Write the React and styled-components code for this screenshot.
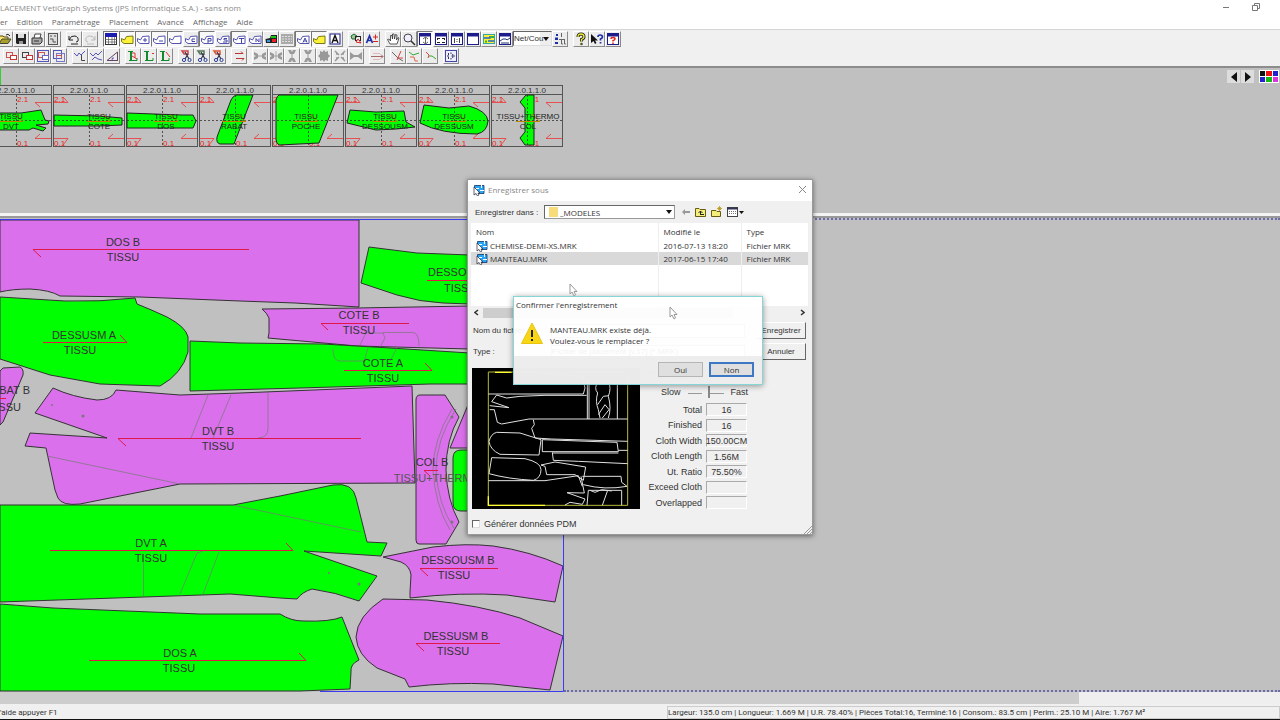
import React from "react";
import styled, { createGlobalStyle } from "styled-components";

const GlobalStyle = createGlobalStyle`
  * {
    box-sizing: border-box;
  }
  body {
    margin: 0;
    background: #c0c0c0;
    font-family: "Open Sans", "Noto Sans", sans-serif;
    font-size: 8px;
    color: #333;
  }
  button, input, select {
    font: inherit;
    color: inherit;
    margin: 0;
    padding: 0;
  }
  svg {
    display: block;
    flex: none;
  }
`;

const Window = styled.div`
  position: relative;
  min-height: 100vh;
  display: flex;
  flex-direction: column;
  overflow: hidden;
  border-bottom: 1px solid #111;
`;

/* ---------- title, menu and toolbars ---------- */

const TitleBar = styled.header`
  display: flex;
  align-items: center;
  justify-content: space-between;
  height: 16px;
  padding: 0 20px 2px 0;
  background: #fff;
  color: #8a8a8a;
  white-space: nowrap;
`;

const WindowControls = styled.div`
  display: flex;
  gap: 22px;
`;

const PlainButton = styled.button`
  display: flex;
  align-items: center;
  justify-content: center;
  border: 0;
  background: none;
`;

const MenuBar = styled.nav`
  display: flex;
  align-items: center;
  gap: 9px;
  height: 13px;
  padding-bottom: 2px;
  background: #fff;
`;

const MenuLink = styled.a`
  color: #666;
  text-decoration: none;
`;

const ToolbarArea = styled.div`
  background: #f0f0f0;
  border-top: 1px solid #d5d5d5;
  border-bottom: 2px solid #8c8c8c;
  padding-bottom: 2px;
`;

const Toolbar = styled.div`
  display: flex;
  align-items: center;
  gap: 5px;
  height: 17px;
  margin-left: ${(p) => p.$indent}px;
`;

const ToolGroup = styled.div`
  display: flex;
`;

const ToolButton = styled.button`
  width: 16px;
  height: 16px;
  display: flex;
  align-items: center;
  justify-content: center;
  border: 1px solid;
  border-color: ${(p) =>
    p.$pressed ? "#777 #fff #fff #777" : "#fff #8a8a8a #8a8a8a #fff"};
  background: ${(p) => (p.$pressed ? "#f8f8f8" : "#ececec")};
`;

const ZoomSelect = styled.select`
  width: 39px;
  height: 15px;
  border: 1px solid;
  border-color: #666 #ddd #ddd #666;
  border-radius: 0;
  font-family: "Liberation Sans", Arial, sans-serif;
  background: #fff;
  appearance: none;
  background-image: linear-gradient(#eee, #eee);
  background-size: 11px 13px;
  background-position: right;
  background-repeat: no-repeat;
`;

const SelectBox = styled.div`
  position: relative;
  display: flex;
`;

const SelectArrow = styled.span`
  position: absolute;
  right: 3px;
  top: 0;
  bottom: 0;
  display: flex;
  align-items: center;
  pointer-events: none;
`;

const Down = () => (
  <svg width="6" height="4" viewBox="0 0 6 4">
    <path d="M0 0H6L3 4Z" fill="#111" />
  </svg>
);

const NAVY = "#1c1c8c";
const outline = "M1.5 6.5 4.5 8 6.5 4.5 13 4V11.5H4L1.5 9.5Z";

const Piece = ({ mark, fill = "#fff" }) => (
  <>
    <path d={outline} fill={fill} stroke="#5555b0" />
    <path d={mark} fill="none" stroke="#4444a8" />
  </>
);

const Pane = ({ children }) => (
  <>
    <rect x="1.5" y="1.5" width="11" height="11" fill="#fff" stroke={NAVY} />
    <path d="M1 3H13" stroke={NAVY} strokeWidth="3" />
    {children}
  </>
);

const Scissors = ({ color }) => (
  <>
    <path d="M3 2H9V5H5Z" fill="none" stroke={color} strokeWidth="1.5" />
    <path d="M6 3 10 10M9 5 6 10" stroke="#335" strokeWidth="1.2" />
    <circle cx="5" cy="11" r="1.6" fill="none" stroke="#2d3f9c" />
    <circle cx="10.5" cy="11" r="1.6" fill="none" stroke="#2d3f9c" />
  </>
);

const Squares = ({ a, b, fill = "none" }) => (
  <>
    <rect x="2.5" y="3.5" width="6" height="5" fill={fill} stroke={a} />
    <rect x="6.5" y="6.5" width="6" height="4" fill="#fff" stroke={b} />
  </>
);

const Ell = ({ dot }) => (
  <>
    <path d="M2 2.5H7M3 11.5H11V9" fill="none" stroke="#128a2c" />
    <path d="M5 2V12" stroke="#128a2c" strokeWidth="2" />
    <path d={dot} stroke="#d33" fill="none" />
  </>
);

const Clamp = ({ turn = 0 }) => (
  <path
    transform={`rotate(${turn} 7 7)`}
    d="M1 3 5 5V9L1 11V8L3 7 1 6ZM13 3 9 5V9L13 11V8L11 7 13 6ZM5 6.5H9V7.5H5Z"
    fill="#999"
  />
);

const glyphs = {
  open: (
    <>
      <path d="M1 11V4H5L6 5H10V7" fill="#f7e774" stroke="#554400" />
      <path d="M1 11.5 4 7H13L10 11.5Z" fill="#a8a02a" stroke="#443" />
      <path d="M8 3Q10 1 12 4" fill="none" stroke="#222" />
    </>
  ),
  save: (
    <>
      <path d="M2 2H12V12H3L2 11Z" fill="#222" />
      <path d="M4 2H10V6H4Z" fill="#ddd" />
      <path d="M5 9H9V12H5Z" fill="#999" />
    </>
  ),
  print: (
    <>
      <path d="M4 6 5 2H11L10 6" fill="#fff" stroke="#444" />
      <path d="M2 6H12V10L10 12H2Z" fill="#aaa" stroke="#333" />
      <path d="M4 9H9" stroke="#333" />
    </>
  ),
  preview: (
    <>
      <rect x="2.5" y="1.5" width="9" height="11" fill="#ddd" stroke="#555" />
      <path d="M4 4H6M8 4H10M4 7H7V10H10" stroke="#555" fill="none" />
    </>
  ),
  undo: (
    <path d="M2 4V8H6M2 8Q4 3 8 4Q12 5 11 9Q10 10 9 10M4 12H11" fill="none" stroke="#222" />
  ),
  redo: (
    <path d="M12 4V8H8M12 8Q10 3 6 4Q2 5 3 9Q4 10 5 10M4 12H11" fill="none" stroke="#bbb" />
  ),
  table: (
    <>
      <rect x="1.5" y="1.5" width="11" height="11" fill="#fff" stroke="#333" />
      <path d="M1 3H13" stroke="#1c1cb0" strokeWidth="4" />
      <path d="M1 7.5H13M1 10H13M4.5 5V12M8 5V12M10.5 5V12" stroke="#555" strokeWidth="0.7" />
    </>
  ),
  pieceYellow: <path d={outline} fill="#fff23a" stroke="#77771c" />,
  piecePlus: <Piece mark="M9 6V10M7 8H11" />,
  pieceMinus: <Piece mark="M7 9H11" />,
  piece: <Piece mark="M12 11H13" />,
  pieceC: <Piece mark="M11 7H8V9.5H11" />,
  pieceP: <Piece mark="M8 11V6.5H11V9H8" />,
  pieceS: <Piece mark="M11 6.5H8V8H11V10H7" />,
  pieceT: <Piece mark="M7 6.5H12M9.5 6.5V11" />,
  pieceN: <Piece mark="M8 10V6.5L11 10V6.5" />,
  pieceA: <Piece mark="M7 10.5 9 6 11 10.5M8 9H10.5" />,
  flag: (
    <>
      <path d="M1.5 7 6 6 7 3H13V11H2Z" fill="#222" />
      <path d="M3 8H6V10H3Z" fill="#39d" />
      <path d="M7 4H12V6H7Z" fill="#1c1" />
      <path d="M8 7H12V10H8Z" fill="#e22" />
    </>
  ),
  keys: (
    <>
      <rect x="1" y="2" width="12" height="10" fill="#aaa" />
      <path d="M2 4.5H12M2 7H12M2 9.5H12" stroke="#ddd" strokeDasharray="2 1" />
    </>
  ),
  letter: (
    <>
      <rect x="2" y="2" width="10" height="10" fill="#fff" stroke={NAVY} />
      <path d="M4 11 7 3.5 10 11M5 8.5H9" stroke="#111" strokeWidth="1.4" fill="none" />
    </>
  ),
  shapes: (
    <>
      <path d="M2 4 5 2 8 4 6 7 3 7Z" fill="#9c9" stroke="#263" />
      <rect x="6.5" y="4.5" width="5" height="4" fill="none" stroke="#222" />
      <path d="M7 10 9 7 12 11Z" fill="#fff" stroke="#d22" />
    </>
  ),
  aPlus: (
    <>
      <path d="M1.5 11 4.5 4 7.5 11M3 8.5H6.5" stroke="#1c2fa8" strokeWidth="1.7" fill="none" />
      <path d="M8 5H13M10.5 2.5V7.5M8 9.5H13" stroke="#d22" />
    </>
  ),
  hand: (
    <path
      d="M4 12 1.5 7.5 3 7 4.5 9V3.5L6 3.5 6.5 7V2H8L8.5 7 9.5 2.5 11 3 10.5 8 12 5.5 13 6 11 12Z"
      fill="#fff"
      stroke="#333"
      strokeWidth="0.8"
    />
  ),
  lens: (
    <>
      <circle cx="6" cy="6" r="4" fill="#eef" stroke="#444" />
      <path d="M9 9 13 13" stroke="#333" strokeWidth="1.6" />
    </>
  ),
  paneFit: (
    <Pane>
      <path d="M7.5 5V12M5 7 7.5 5 10 7M5 10 7.5 12 10 10" stroke="#666" fill="none" />
    </Pane>
  ),
  paneGrow: (
    <Pane>
      <path d="M3 6.5H6M3.5 6V8M11 6.5H8M10.5 6V8M3 10.5H6M11 10.5H8" stroke="#222" />
    </Pane>
  ),
  paneOne: (
    <Pane>
      <path d="M4.5 6V11M9.5 6V11M7 7V8M7 9V10" stroke="#444" />
    </Pane>
  ),
  pane: <Pane />,
  paneColor: (
    <>
      <rect x="1.5" y="2.5" width="11" height="9" fill="#fe3" stroke="#3a9" />
      <path d="M2 6H8V4M6 9H12" stroke="#26c" strokeWidth="1.5" fill="none" />
      <path d="M9 5H12M3 9.5H5" stroke="#2b3" strokeWidth="2" />
    </>
  ),
  paneWave: (
    <Pane>
      <path d="M2 9 5 7H8L9 8 12 6M3 11H11" stroke="#237" fill="none" />
    </Pane>
  ),
  tree: (
    <>
      <path d="M3 2H5V4H3ZM2 5.5H5V8H2ZM2 10H5V12H2Z" fill="#1c2fa8" />
      <path d="M8.5 1V5M8.5 7V12H10M11.5 7V12H13M6 7.5H12" stroke="#666" fill="none" />
    </>
  ),
  help: (
    <>
      <path d="M4 5Q4 2 7 2Q10 2 10 5Q10 6.5 7.5 7.5V9.5" fill="none" stroke="#222" strokeWidth="3" />
      <path d="M4 5Q4 2 7 2Q10 2 10 5Q10 6.5 7.5 7.5V9.5" fill="none" stroke="#ee3" strokeWidth="1.3" />
      <circle cx="7.5" cy="12" r="1.3" fill="#552" />
    </>
  ),
  whatsThis: (
    <>
      <path d="M1 2V11L3.5 9 5 12 6.5 11 5 8.5H8Z" fill="#111" />
      <path d="M8 5Q8 3 10 3Q12.5 3 12.5 5Q12.5 6 10.5 7V8.5M10.5 10V11.5" fill="none" stroke="#1c2fa8" strokeWidth="1.7" />
    </>
  ),
  about: (
    <Pane>
      <path d="M5 7Q5 5.5 7 5.5Q9 5.5 9 7Q9 8 7 8.5V9.5M7 10.5V12" stroke="#d22" strokeWidth="1.5" fill="none" />
    </Pane>
  ),
  sqRed: <Squares a="#c55" b="#c33" />,
  sqBlack: <Squares a="#444" b="#c33" />,
  sqBlue: (
    <>
      <rect x="1.5" y="1.5" width="11" height="11" fill="none" stroke="#55b" />
      <Squares a="#c55" b="#66c" />
    </>
  ),
  sqBoth: (
    <>
      <rect x="1.5" y="1.5" width="8" height="8" fill="none" stroke="#55b" />
      <rect x="4.5" y="4.5" width="8" height="8" fill="none" stroke="#77c" />
      <path d="M4 6.5H9.5V9" fill="none" stroke="#c55" />
    </>
  ),
  curveL: (
    <>
      <path d="M1 4 4 7 6 4 8 6 12 2" fill="none" stroke="#55b" />
      <path d="M8.5 6V11.5H12" fill="none" stroke="#444" />
    </>
  ),
  curves: <path d="M1 4 4 7 7 4 9 6 13 2M3 11 6 8 9 10 13 11" fill="none" stroke="#55b" />,
  angle: (
    <>
      <path d="M2 11.5H13M2 11.5 12.5 3V12" fill="none" stroke="#646" />
      <path d="M7 11Q7 8 9 9" fill="none" stroke="#55b" />
    </>
  ),
  ell1: <Ell dot="M6 7 11 10M6 4H9V9" />,
  ell2: <Ell dot="M10 4.5H12" />,
  ell3: <Ell dot="M8 3 12 8" />,
  cut1: <Scissors color="#c44" />,
  cut2: <Scissors color="#575" />,
  cut3: <Scissors color="#d53" />,
  swap: <path d="M3 4.5H11L9 2.5M12 9.5H4M12 9.5 10 11.5" fill="none" stroke="#b33" />,
  clamp: <Clamp />,
  clampWide: (
    <>
      <Clamp />
      <path d="M7 2V12" stroke="#aaa" />
    </>
  ),
  clampUp: <Clamp turn={90} />,
  burst: (
    <path d="M7 1 8.5 3 11 2 11 5 13 7 11 9 11 12 8.5 11 7 13 5.5 11 3 12 3 9 1 7 3 5 3 2 5.5 3Z" fill="#999" />
  ),
  explode: <path d="M2 2 6 6M12 2 8 6M2 12 6 8M12 12 8 8M3 5H5M9 9H11M9 5H11M3 9H5" stroke="#999" strokeWidth="1.5" />,
  bow: <path d="M1 3 5 6H9L13 3V11L9 8H5L1 11Z" fill="#999" />,
  across: (
    <>
      <path d="M1 7.5H13L11 5.5M11 9.5 13 7.5" fill="none" stroke="#a66" />
      <path d="M3 4.5H10M3 10.5H10" stroke="#dbb" />
    </>
  ),
  forkA: (
    <>
      <path d="M1 3 7 9 12 12" fill="none" stroke="#666" />
      <path d="M6 11 10 2M7 9H12" fill="none" stroke="#d44" />
    </>
  ),
  forkB: (
    <>
      <path d="M2 3 6 6 12 4" fill="none" stroke="#3a3" />
      <path d="M3 8H7L8 12H11" fill="none" stroke="#d64" />
    </>
  ),
  forkC: (
    <>
      <path d="M3 3 6 6 5 9" fill="none" stroke="#d44" />
      <path d="M6 7H9L13 10" fill="none" stroke="#3a3" />
    </>
  ),
  frame: (
    <>
      <rect x="1.5" y="1.5" width="11" height="11" fill="#eef" stroke="#44a" />
      <path d="M4.5 4V6M4.5 8V10M7 3.5V5M7 9V10.5M9 5 8 7 9 9M3 7H5M9 7H11" stroke="#335" fill="none" />
    </>
  ),
};

const mainTools = [
  ["open", "save", "print", "preview"],
  ["undo", "redo"],
  [
    "*table", "*pieceYellow", "*piecePlus", "*pieceMinus", "*piece", "pieceC",
    "*pieceP", "pieceS", "*pieceT", "pieceN", "flag", "keys", "*pieceA",
    "*pieceYellow", "letter",
  ],
  ["shapes", "aPlus"],
  ["hand", "lens", "*paneFit", "paneGrow", "paneOne", "pane", "paneColor", "paneWave", "zoom", "tree"],
  ["help", "whatsThis", "about"],
];

const editTools = [
  ["sqRed", "sqBlack", "sqBlue", "sqBoth"],
  ["curveL", "curves", "angle"],
  ["ell1", "ell2", "ell3"],
  ["cut1", "cut2", "cut3"],
  ["swap"],
  ["clamp", "clampWide", "clampUp", "clampUp", "burst", "explode", "bow"],
  ["across"],
  ["forkA", "forkB", "forkC"],
  ["frame"],
];

const Tool = ({ id }) => {
  if (id === "zoom") {
    return (
      <SelectBox>
        <ZoomSelect aria-label="Affichage net">
          <option>Net/Cou</option>
        </ZoomSelect>
        <SelectArrow>
          <Down />
        </SelectArrow>
      </SelectBox>
    );
  }
  const name = id.replace("*", "");
  return (
    <ToolButton type="button" aria-label={name} $pressed={id[0] === "*"}>
      <svg width="14" height="14" viewBox="0 0 14 14">
        {glyphs[name]}
      </svg>
    </ToolButton>
  );
};

const Tools = ({ groups, indent }) => (
  <Toolbar $indent={indent}>
    {groups.map((group, g) => (
      <ToolGroup key={g}>
        {group.map((id, i) => (
          <Tool id={id} key={i} />
        ))}
      </ToolGroup>
    ))}
  </Toolbar>
);

/* ---------- piece strip ---------- */

const StripArea = styled.section`
  height: 145px;
  background: #c0c0c0;
`;

const StripNav = styled.div`
  display: flex;
  align-items: center;
  justify-content: flex-end;
  gap: 5px;
  height: 17px;
  padding-right: 1px;
  border-left: 1px solid #2fd02f;
`;

const ArrowPair = styled.div`
  display: flex;
  gap: 1px;
`;

const ArrowButton = styled(PlainButton)`
  width: 13px;
  height: 13px;
  background: #ddd;
`;

const Strip = styled.div`
  display: flex;
  gap: 1px;
  margin-left: -20px;
`;

const Thumb = styled.figure`
  margin: 0;
  width: 72px;
  height: 62px;
  border: 1px solid #555;
  font-family: "Liberation Sans", Arial, sans-serif;
`;

const ThumbCode = styled.figcaption`
  height: 9px;
  line-height: 9px;
  border-bottom: 1px solid #555;
  text-align: center;
`;

const ThumbSvg = styled.svg`
  overflow: visible;
  font-size: 8px;
`;

const thumbs = [
  { name: "DVT", x: 30, d: "M0 18H40L60 15 64 25 68 26 67 29 55 30 65 33 62 36 52 33 48 35H0Z" },
  { name: "COTE", x: 45, d: "M0 20 45 21 68 23V30L45 31 0 31Z" },
  { name: "DOS", x: 39, d: "M0 18 55 20 66 20 69 26 66 33H0Z" },
  { name: "RABAT", x: 34, d: "M36 0H53L34 49H20Q16 48 17 42L31 5Q33 1 36 0Z" },
  { name: "POCHE", x: 33, d: "M6 0H65L46 48 6 50Q3 48 3 44V5Q4 1 6 0Z" },
  { name: "DESSOUSM", x: 39, d: "M4 15 30 17 58 16 60 27 69 32 50 34 30 35 1 28Z" },
  { name: "DESSUSM", x: 35, d: "M5 10 30 13 50 11Q68 16 69 26Q68 37 58 39Q22 39 1 28Z" },
  { name: "COL", top: "TISSU+THERMO", x: 36, d: "M34 0H42V50H33L28 43 33 37V13L28 7Z" },
];

const PieceThumb = ({ name, top = "TISSU", x, d }) => (
  <Thumb>
    <ThumbCode>2.2.0.1.1.0</ThumbCode>
    <ThumbSvg width="70" height="51" viewBox="0 0 70 51">
      <path
        d="M0 7.5H14L9 2M70 7.5H54L59 12M0 43.5H14L9 50M70 43.5H54L59 39"
        fill="none"
        stroke="#e33"
        strokeOpacity="0.8"
      />
      <g fill="#e22">
        <text x="0" y="7">2.1</text>
        <text x="36" y="7">2.1</text>
        <text x="0" y="51">0.1</text>
        <text x="36" y="51">0.1</text>
      </g>
      <path d={d} fill="#0f0" stroke="#222" />
      <path d="M35.5 0V51M0 25.5H70" stroke="#333" strokeOpacity="0.8" strokeDasharray="2 2" />
      <path d={`M${x - 12} 26.5H${x + 12}L${x + 4} 19`} fill="none" stroke="#b80" />
      <g textAnchor="middle" fill="#222">
        <text x={x} y="24">{top}</text>
        <text x={x} y="34">{name}</text>
      </g>
    </ThumbSvg>
  </Thumb>
);

/* ---------- marker canvas ---------- */

const MarkerArea = styled.main`
  flex: 1;
  display: flex;
  border-top: 3px solid #f4f4f4;
  background: #c0c0c0;
`;

const MarkerFrame = styled.div`
  flex: 1;
  display: flex;
  border-top: 2px solid #9a9a9a;
`;

const MarkerRest = styled.div`
  flex: 1;
  height: 474px;
  border-top: 2px dotted #6a6aa8;
  border-bottom: 2px dotted #6a6aa8;
`;

const MarkerSvg = styled.svg`
  font-family: "Liberation Sans", Arial, sans-serif;
  font-size: 11px;
`;

const GREEN = "#00ff00";
const VIOLET = "#da70eb";

const pieces = [
  { fill: VIOLET, d: "M0 220H359V307L295 303 240 301 140 297 60 296Q50 290 30 289 12 289 0 292Z" },
  { fill: GREEN, d: "M0 297 65 301Q100 302 135 298L137 304Q152 310 167 317 186 327 188 337V352Q182 374 160 386L100 384 50 375 0 359Z" },
  { fill: VIOLET, d: "M0 371 3 368 20 367Q24 369 23 375L3 422 0 425Z" },
  { fill: GREEN, d: "M369 247 417 253 470 255V304L443 303Q420 302 397 295L361 283Z" },
  { fill: VIOLET, d: "M262 309 357 308 470 306V349L357 346 268 338 269 333V318Q267 313 262 309Z" },
  { fill: GREEN, d: "M190 341 240 343 323 344 390 348 470 353V384H430L300 388 190 391Z" },
  { fill: VIOLET, d: "M53 388Q72 397 97 400 112 400 116 390L180 395 240 393 412 386 415 483 180 484 80 504Q62 506 58 498L55 490 46 448 25 446 30 433 107 438 35 413Z" },
  { fill: VIOLET, d: "M470 400 450 448H470Z" },
  { fill: VIOLET, d: "M416 400Q416 395 420 395H445L459 417Q446 440 446 470 447 500 459 522L446 544H419Q416 544 416 540Z" },
  { fill: GREEN, d: "M475 450H461Q453 450 453 458V503Q453 511 461 511H475Z" },
  { fill: GREEN, d: "M0 505H233L280 496 333 485Q353 482 356 498L367 542 387 543 381 556 304 551 377 576 359 601Q335 592 312 589 302 592 297 599L280 598 230 594 0 602Z" },
  { fill: GREEN, d: "M0 604 53 608 200 614H280Q291 621 303 621 330 622 342 617L359 660Q350 664 351 672L350 689 300 691H0Z" },
  { fill: VIOLET, d: "M383 557 433 547Q467 543 493 546 530 551 563 566L555 602 507 595Q460 592 410 598V592L411 575Q410 566 401 562Z" },
  { fill: VIOLET, d: "M383 599 427 600Q480 605 520 618L563 636 550 690 493 684Q450 682 409 687L405 679 377 668Q357 655 356 637 357 616 383 599Z" },
];

const labels = [
  { name: "DOS B", x: 123, y: 246, line: "M249 249.5H33L41 257" },
  { name: "DESSUSM A", x: 84, y: 339, under: 80, line: "M43 342.5H127L120 335" },
  { name: "COTE B", x: 359, y: 319, line: "M409 323.5H321L328 330" },
  { name: "COTE A", x: 383, y: 367, line: "M344 370.5H432L425 363" },
  { name: "DVT B", x: 218, y: 435, line: "M361 438.5H118L126 446" },
  { name: "DVT A", x: 151, y: 547, line: "M50 550.5H293L286 543" },
  { name: "DOS A", x: 180, y: 657, under: 179, line: "M89 660.5H306L299 653" },
  { name: "DESSOUSM B", x: 458, y: 564, under: 454, line: "M498 568.5H420L428 576" },
  { name: "DESSUSM B", x: 456, y: 640, under: 453, line: "M500 643.5H416L424 651" },
];

const Marker = () => (
  <MarkerSvg width="564" height="474" viewBox="0 218 564 474">
    {pieces.map((p, i) => (
      <path key={i} d={p.d} fill={p.fill} stroke="#333" />
    ))}
    <g fill="none" stroke="#777" strokeOpacity="0.7">
      <path d="M208 395 191 438M231 395 213 438M268 393V428Q268 438 258 438" />
      <path d="M47 456 180 484M233 505 361 532" />
      <path d="M143.5 562V596M180 594 197 553 203 551M203 594 219 552" />
      <path d="M333 349Q333 361 340 361H364L368 348M360 345 366 333H383L385 338 380 347M383 332.5H413Q419 333 419 346M390 361 397 348" />
      <path d="M456 409Q436 440 436 470 438 505 454 528M452 409Q433 440 433 470 435 505 450 530" />
    </g>
    <g fill="#777">
      <circle cx="83" cy="416" r="1.5" />
      <circle cx="52" cy="405" r="1" />
      <circle cx="359" cy="584" r="1.5" />
      <circle cx="329" cy="573" r="1" />
      <circle cx="452" cy="522" r="1.5" />
      <circle cx="452" cy="417" r="1.5" />
    </g>
    <g fill="none" stroke="#e01848">
      {labels.map((l) => (
        <path key={l.name} d={l.line} />
      ))}
      <path d="M0 398.5H6M427 280.5H470M438 470.5H424L430 476" />
    </g>
    <g fill="#333" textAnchor="middle">
      {labels.map((l) => (
        <React.Fragment key={l.name}>
          <text x={l.x} y={l.y}>{l.name}</text>
          <text x={l.under || l.x} y={l.y + 15}>TISSU</text>
        </React.Fragment>
      ))}
      <text x="432" y="466">COL B</text>
      <text x="437" y="482" fill="#555">TISSU+THERMO</text>
    </g>
    <g fill="#333" textAnchor="end">
      <text x="30" y="394">RABAT B</text>
      <text x="21" y="411">TISSU</text>
    </g>
    <g fill="#333">
      <text x="428" y="276">DESSOUSM A</text>
      <text x="444" y="292">TISSU</text>
    </g>
    <path d="M0 219.5H563.5V691.5H320" fill="none" stroke="#3a3af0" />
  </MarkerSvg>
);

/* ---------- bottom bars ---------- */

const ScrollTrack = styled.div`
  height: 12px;
  background: #efefef;
`;

const ScrollThumb = styled.div`
  width: 84.3%;
  height: 100%;
  background: #cdcdcd;
`;

const StatusBar = styled.footer`
  display: flex;
  align-items: center;
  height: 15px;
  padding-top: 1px;
  background: #f0f0f0;
  font-family: Roboto, "Open Sans", sans-serif;
  white-space: nowrap;
`;

const StatusHelp = styled.div`
  width: 667px;
`;

const StatusInfo = styled.div`
  flex: 1;
  border: 1px solid #ccc;
  line-height: 11px;
`;

/* ---------- save dialog ---------- */

const Dialog = styled.section`
  position: absolute;
  left: 467px;
  top: 179px;
  width: 346px;
  border: 1px solid #999;
  background: #f0f0f0;
  box-shadow: 0 1px 5px rgba(0, 0, 0, 0.5);
`;

const DialogTitle = styled.header`
  display: flex;
  align-items: center;
  gap: 3px;
  height: 21px;
  padding: 0 5px 2px;
  background: #fff;
  color: #888;

  button {
    margin-left: auto;
  }
`;

const LookIn = styled.div`
  display: flex;
  align-items: center;
  gap: 6px;
  height: 22px;
  padding-left: 7px;

  label {
    width: 63px;
    font-family: "Liberation Sans", Arial, sans-serif;
    white-space: nowrap;
  }
`;

const FolderSelect = styled.select`
  width: 131px;
  height: 14px;
  padding-left: 15px;
  border: 1px solid;
  border-color: #666 #999 #999 #666;
  border-radius: 0;
  background: #fff;
  appearance: none;
`;

const FolderMark = styled.span`
  position: absolute;
  left: 5px;
  top: 2px;
  width: 9px;
  height: 10px;
  background: #f8dc7c;
`;

const ListBox = styled.div`
  margin: 0 4px 1px 3px;
  background: #fff;
`;

const FileTable = styled.table`
  width: 100%;
  table-layout: fixed;
  border-collapse: collapse;

  th {
    height: 16px;
    padding: 0 5px;
    text-align: left;
    font-weight: 400;
  }
  td {
    height: 13px;
    padding: 0 5px;
    line-height: 13px;
    white-space: nowrap;
  }
  th + th, td + td {
    border-left: 1px solid #eee;
  }
`;

const FileRow = styled.tr`
  background: ${(p) => (p.$selected ? "#d9d9d9" : "none")};
`;

const FileName = styled.span`
  display: flex;
  align-items: center;
  gap: 2px;
`;

const ListEmpty = styled.div`
  height: 41px;
  display: grid;
  grid-template-columns: 187px 83px 1fr;

  span + span {
    border-left: 1px solid #eee;
  }
`;

const ListScroll = styled.div`
  display: flex;
  align-items: center;
  justify-content: space-between;
  gap: 4px;
  height: 13px;
  padding: 0 3px;
  background: #f0f0f0;
`;

const ListThumb = styled.div`
  width: 250px;
  height: 10px;
  margin-right: auto;
  background: #cdcdcd;
`;

const FormRow = styled.div`
  display: flex;
  align-items: center;
  height: 21px;
  padding: 0 6px 0 5px;
  font-family: "Liberation Sans", Arial, sans-serif;

  label {
    width: 78px;
  }
`;

const NameInput = styled.input`
  width: 194px;
  height: 14px;
  border: 1px solid #aaa;
  background: #fff;
`;

const TypeSelect = styled.select`
  width: 194px;
  height: 14px;
  border: 1px solid #aaa;
  border-radius: 0;
  background: #fff;
  appearance: none;
`;

const DialogButton = styled.button`
  width: 50px;
  height: 17px;
  margin-left: auto;
  border: 1px solid;
  border-color: #fff #666 #666 #fff;
  background: #f0f0f0;
`;

const Details = styled.div`
  display: flex;
  gap: 8px;
  padding: 6px 4px 0;
  font-family: "Liberation Sans", Arial, sans-serif;
  font-size: 9px;
`;

const Stats = styled.div`
  width: 108px;
`;

const CheckLabel = styled.label`
  display: flex;
  align-items: center;
  gap: 4px;
  height: ${(p) => p.$height}px;
`;

const Check = styled.input`
  appearance: none;
  width: 8px;
  height: 8px;
  border: 1px solid;
  border-color: #666 #ddd #ddd #666;
  background: #fff;
`;

const Speed = styled.div`
  display: flex;
  align-items: center;
  justify-content: space-between;
  width: 87px;
  height: 15px;
  margin-left: 13px;
`;

const StatList = styled.div`
  display: flex;
  flex-direction: column;
  justify-content: space-between;
  height: 108px;
  margin-top: 3px;
  padding-right: 9px;
`;

const StatRow = styled.div`
  display: flex;
  align-items: center;
  justify-content: flex-end;
  gap: 4px;
  height: 15px;
  white-space: nowrap;
`;

const StatValue = styled.output`
  width: 41px;
  height: 13px;
  line-height: 12px;
  display: flex;
  justify-content: center;
  border: 1px solid;
  border-color: #aaa #fff #fff #aaa;
`;

const PdmRow = styled.div`
  display: flex;
  align-items: flex-end;
  justify-content: space-between;
  height: 24px;
  padding-left: 4px;
  font-family: "Liberation Sans", Arial, sans-serif;
  font-size: 9px;
`;

const FileIcon = () => (
  <svg width="12" height="12" viewBox="0 0 12 12">
    <path d="M1.5 1.5H11V9.5H1.5Z" fill="#29a5f5" stroke="#136" strokeWidth="0.8" />
    <path d="M3 4.5H6M7 6.5H11M8.5 1V4" stroke="#fff" fill="none" />
    <path d="M1 3V11L3 9.5 4.5 12 6 11 5 9H7Z" fill="#fff" stroke="#223" strokeWidth="0.7" />
  </svg>
);

const LookInIcons = () => (
  <svg width="66" height="14" viewBox="0 0 66 14">
    <path d="M1 7 4 4V6H9V8H4V10Z" fill="#999" />
    <path d="M14.5 3.5H18L19 4.5H24.5V11.5H14.5Z" fill="#f6ee7a" stroke="#665c10" />
    <path d="M19 9.5H23M19.5 9V6M17.5 8 19.5 6 21.5 8" fill="none" stroke="#222" />
    <path d="M30.5 5.5H35L36 6.5H39.5V11.5H30.5Z" fill="#f6ee7a" stroke="#665c10" />
    <path d="M37 2 40 5M40 2 37 5M38.5 1V6M36 3.5H41" stroke="#b8960c" strokeWidth="0.8" />
    <rect x="46.5" y="2.5" width="10" height="9" fill="#fff" stroke="#444" />
    <path d="M46 3.5H57" stroke="#335" strokeWidth="2" />
    <path d="M48 6.5H55M48 8.5H55" stroke="#777" strokeDasharray="1 1" />
    <path d="M58 6H63L60.5 9Z" fill="#111" />
  </svg>
);

const PreviewDrawing = () => (
  <svg width="168" height="141" viewBox="21 25 504 423">
    <rect x="21" y="25" width="504" height="423" fill="#000" />
    <path d="M70 37H488V437H70Z" fill="none" stroke="#b9b93c" strokeWidth="3" />
    <g fill="none" stroke="#e0e0e0" strokeWidth="3">
      <path d="M70 103H355L360 85 352 50 200 38" />
      <path d="M367 65V178M457 65V178M372 65V178" />
      <path d="M95 106 125 115 165 110 240 107H365M95 106 80 126 132 144 74 138M74 150H88L97 188 110 193 192 178H488M205 180 208 195 200 206 210 235 260 238 488 245" />
      <path d="M72 245Q78 222 95 218L165 220 228 240 222 286 105 284Q75 270 72 245ZM232 240V276H460L456 248 232 240M460 272H488" />
      <path d="M262 278 265 302 340 305 488 312M262 280H460" />
      <path d="M80 294 180 297Q228 308 228 330 228 355 205 362 130 358 72 342ZM228 316 270 307 362 322 355 362 330 345H245L240 320 228 316" />
      <path d="M70 363H240L340 348 352 380M352 350H468L470 368 486 380Q420 392 355 375M370 392H470V437M370 392 366 437M428 392 412 437M348 350 358 400 306 399 360 418 352 434 315 428 300 436M375 392 390 398 410 390 440 394" />
      <path d="M400 65Q385 85 398 100 390 125 400 150L405 175M430 65Q440 85 430 110 440 145 430 175M398 135 415 110 432 108M400 165 420 135 432 150 412 175" />
    </g>
    <path d="M90 38H140M70 410V437H240" fill="none" stroke="#ffff30" strokeWidth="4" />
  </svg>
);

const stats = [
  ["Total", "16"],
  ["Finished", "16"],
  ["Cloth Width", "150.00CM"],
  ["Cloth Length", "1.56M"],
  ["Ut. Ratio", "75.50%"],
  ["Exceed Cloth", ""],
  ["Overlapped", ""],
];

const files = [
  { name: "CHEMISE-DEMI-XS.MRK", date: "2016-07-13 18:20" },
  { name: "MANTEAU.MRK", date: "2017-06-15 17:40", selected: true },
];

const SaveDialog = () => (
  <Dialog role="dialog" aria-label="Enregistrer sous">
    <DialogTitle>
      <FileIcon />
      Enregistrer sous
      <PlainButton type="button" aria-label="Fermer">
        <svg width="9" height="9" viewBox="0 0 9 9">
          <path d="M1 1 8 8M8 1 1 8" stroke="#888" />
        </svg>
      </PlainButton>
    </DialogTitle>
    <LookIn>
      <label htmlFor="folder">Enregistrer dans :</label>
      <SelectBox>
        <FolderSelect id="folder">
          <option>_MODELES</option>
        </FolderSelect>
        <FolderMark />
        <SelectArrow>
          <Down />
        </SelectArrow>
      </SelectBox>
      <LookInIcons />
    </LookIn>
    <ListBox>
      <FileTable>
        <colgroup>
          <col width="187" />
          <col width="83" />
          <col />
        </colgroup>
        <thead>
          <tr>
            <th>Nom</th>
            <th>Modifié le</th>
            <th>Type</th>
          </tr>
        </thead>
        <tbody>
          {files.map((f) => (
            <FileRow key={f.name} $selected={f.selected}>
              <td>
                <FileName>
                  <FileIcon />
                  {f.name}
                </FileName>
              </td>
              <td>{f.date}</td>
              <td>Fichier MRK</td>
            </FileRow>
          ))}
        </tbody>
      </FileTable>
      <ListEmpty>
        <span />
        <span />
        <span />
      </ListEmpty>
      <ListScroll>
        <svg width="5" height="7" viewBox="0 0 5 7">
          <path d="M4 1 1 3.5 4 6" fill="none" stroke="#333" strokeWidth="1.5" />
        </svg>
        <ListThumb />
        <svg width="5" height="7" viewBox="0 0 5 7">
          <path d="M1 1 4 3.5 1 6" fill="none" stroke="#333" strokeWidth="1.5" />
        </svg>
      </ListScroll>
    </ListBox>
    <FormRow>
      <label htmlFor="filename">Nom du fichier :</label>
      <NameInput id="filename" />
      <DialogButton type="button">Enregistrer</DialogButton>
    </FormRow>
    <FormRow>
      <label htmlFor="filetype">Type :</label>
      <TypeSelect id="filetype">
        <option>Fichier de placement [v.17] (*.MRK)</option>
      </TypeSelect>
      <DialogButton type="button">Annuler</DialogButton>
    </FormRow>
    <Details>
      <PreviewDrawing />
      <Stats>
        <CheckLabel $height={16}>
          <Check type="checkbox" />
          Preview
        </CheckLabel>
        <Speed>
          Slow
          <svg width="36" height="15" viewBox="0 0 36 15">
            <path d="M0 9.5H14M21 9.5H36" stroke="#999" />
            <path d="M21 2V14" stroke="#888" strokeWidth="2" />
          </svg>
          Fast
        </Speed>
        <StatList>
          {stats.map(([label, value]) => (
            <StatRow key={label}>
              {label}
              <StatValue>{value}</StatValue>
            </StatRow>
          ))}
        </StatList>
      </Stats>
    </Details>
    <PdmRow>
      <CheckLabel $height={20}>
        <Check type="checkbox" />
        Générer données PDM
      </CheckLabel>
      <svg width="8" height="8" viewBox="0 0 8 8">
        <path d="M0 8 8 0M3 8 8 3M6 8 8 6" stroke="#999" />
      </svg>
    </PdmRow>
  </Dialog>
);

/* ---------- overwrite confirmation ---------- */

const Confirm = styled.section`
  position: absolute;
  left: 513px;
  top: 296px;
  width: 250px;
  border: 1px solid #86d6d8;
  background: rgba(255, 255, 255, 0.93);
  box-shadow: 0 1px 6px rgba(0, 0, 0, 0.4);
`;

const ConfirmTitle = styled.header`
  height: 17px;
  line-height: 16px;
  padding-left: 2px;
`;

const ConfirmBody = styled.div`
  display: flex;
  align-items: flex-start;
  gap: 7px;
  height: 42px;
  padding: 8px 7px 0;
`;

const ConfirmText = styled.p`
  margin: 2px 0 0;
  line-height: 11px;
`;

const ConfirmActions = styled.div`
  display: flex;
  align-items: center;
  justify-content: flex-end;
  gap: 6px;
  height: 28px;
  padding: 0 8px 1px 0;
  background: rgba(232, 232, 232, 0.8);
`;

const ConfirmButton = styled.button`
  width: 45px;
  height: 15px;
  line-height: 11px;
  border: ${(p) => (p.$focus ? "2px solid #3d78c4" : "1px solid #b5b5b5")};
  background: #dfdfdf;
`;

const ConfirmDialog = () => (
  <Confirm role="alertdialog" aria-label="Confirmer l'enregistrement">
    <ConfirmTitle>Confirmer l'enregistrement</ConfirmTitle>
    <ConfirmBody>
      <svg width="22" height="22" viewBox="0 0 22 22">
        <path d="M11 1 21.5 21.5H0.5Z" fill="#f8d616" stroke="#e8c410" />
        <path d="M11 8V15M11 17V19" stroke="#222" strokeWidth="2" />
      </svg>
      <ConfirmText>
        MANTEAU.MRK existe déjà.
        <br />
        Voulez-vous le remplacer ?
      </ConfirmText>
    </ConfirmBody>
    <ConfirmActions>
      <ConfirmButton type="button">Oui</ConfirmButton>
      <ConfirmButton type="button" $focus>
        Non
      </ConfirmButton>
    </ConfirmActions>
  </Confirm>
);

const CursorSvg = styled.svg`
  position: absolute;
  left: ${(p) => p.$x}px;
  top: ${(p) => p.$y}px;
`;

const Cursor = ({ x, y }) => (
  <CursorSvg $x={x} $y={y} width="9" height="14" viewBox="0 0 9 14">
    <path d="M1 1V11L3 9 5 13 6.5 12 5 8.5H8Z" fill="#fff" stroke="#999" />
  </CursorSvg>
);

const menus = ["er", "Edition", "Paramétrage", "Placement", "Avancé", "Affichage", "Aide"];

export default function App() {
  return (
    <>
      <GlobalStyle />
      <Window>
        <TitleBar>
          LACEMENT VetiGraph Systems (JPS Informatique S.A.) - sans nom
          <WindowControls>
            <PlainButton type="button" aria-label="Réduire">
              <svg width="8" height="8" viewBox="0 0 8 8">
                <path d="M1 4.5H7" stroke="#777" />
              </svg>
            </PlainButton>
            <PlainButton type="button" aria-label="Restaurer">
              <svg width="8" height="8" viewBox="0 0 8 8">
                <path d="M0.5 2.5H5.5V7.5H0.5ZM2.5 2V0.5H7.5V5.5H6" fill="none" stroke="#777" />
              </svg>
            </PlainButton>
          </WindowControls>
        </TitleBar>
        <MenuBar>
          {menus.map((m) => (
            <MenuLink href="#" key={m}>
              {m}
            </MenuLink>
          ))}
        </MenuBar>
        <ToolbarArea>
          <Tools groups={mainTools} indent={-3} />
          <Tools groups={editTools} indent={3} />
        </ToolbarArea>
        <StripArea>
          <StripNav>
            <ArrowPair>
              <ArrowButton type="button" aria-label="Précédent">
                <svg width="6" height="10" viewBox="0 0 6 10">
                  <path d="M6 0V10L0 5Z" fill="#111" />
                </svg>
              </ArrowButton>
              <ArrowButton type="button" aria-label="Suivant">
                <svg width="6" height="10" viewBox="0 0 6 10">
                  <path d="M0 0V10L6 5Z" fill="#111" />
                </svg>
              </ArrowButton>
            </ArrowPair>
            <PlainButton type="button" aria-label="Couleurs">
              <svg width="20" height="13" viewBox="0 0 20 13">
                <rect width="20" height="13" fill="#fff" />
                <path d="M1 1H6V6H1Z" fill="#111" />
                <path d="M7 1H13V6H7Z" fill="#e11" />
                <path d="M14 1H19V6H14ZM1 7H6V12H1Z" fill="#22c" />
                <path d="M7 7H13V12H7Z" fill="#1b1" />
                <path d="M14 7H19V12H14Z" fill="#d3d" />
              </svg>
            </PlainButton>
          </StripNav>
          <Strip>
            {thumbs.map((t) => (
              <PieceThumb key={t.name} {...t} />
            ))}
          </Strip>
        </StripArea>
        <MarkerArea>
          <MarkerFrame>
            <Marker />
            <MarkerRest />
          </MarkerFrame>
        </MarkerArea>
        <ScrollTrack>
          <ScrollThumb />
        </ScrollTrack>
        <StatusBar>
          <StatusHelp>'aide appuyer F1</StatusHelp>
          <StatusInfo>
            Largeur: 135.0 cm | Longueur: 1.669 M | U.R. 78.40% | Pièces
            Total:16, Terminé:16 | Consom.: 83.5 cm | Perim.: 25.10 M | Aire:
            1.767 M²
          </StatusInfo>
        </StatusBar>
        <SaveDialog />
        <ConfirmDialog />
        <Cursor x={569} y={283} />
        <Cursor x={669} y={306} />
      </Window>
    </>
  );
}
